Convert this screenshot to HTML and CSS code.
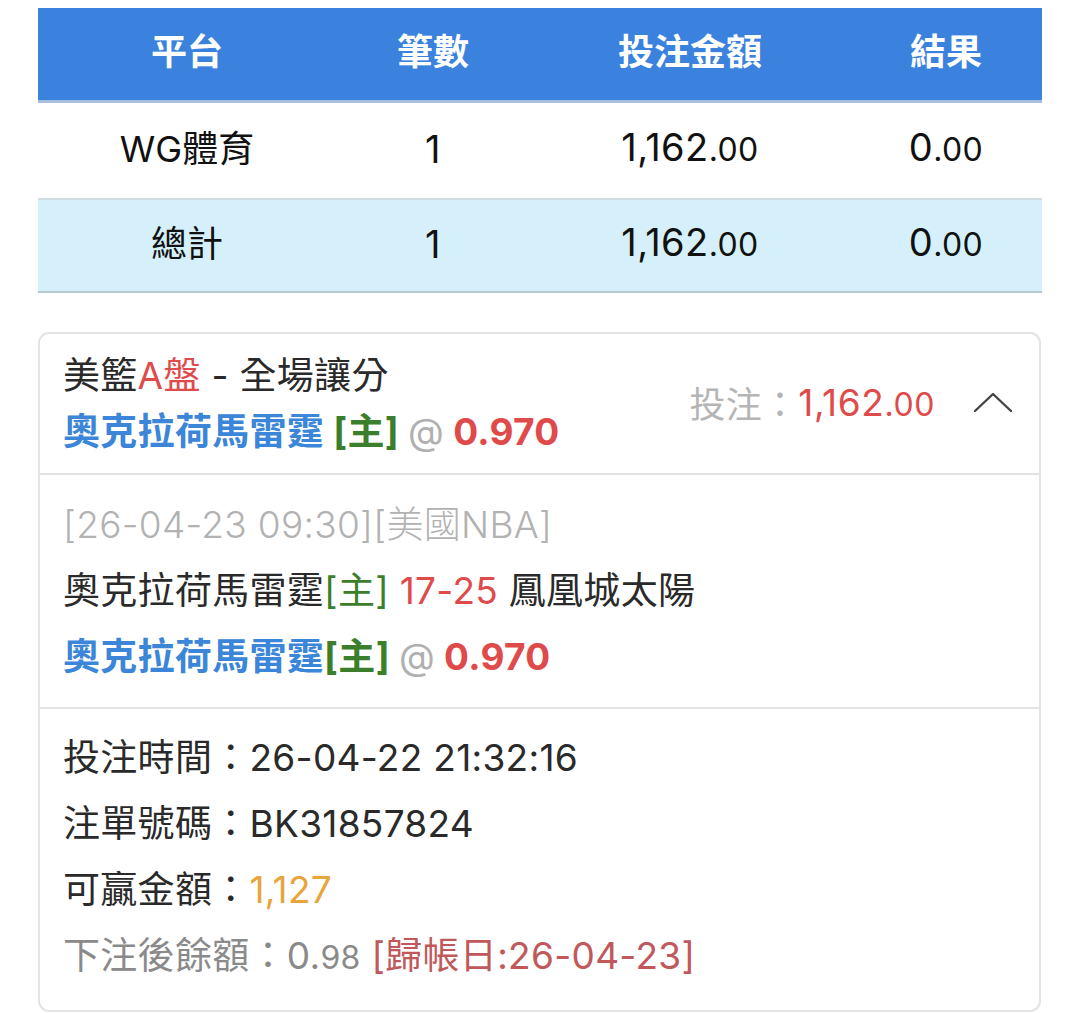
FILE: index.html
```html
<!DOCTYPE html>
<html lang="zh-Hant">
<head>
<meta charset="utf-8">
<link rel="stylesheet" href="styles.css">
</head>
<body>
<div class="page">
  <div class="summary">
    <div class="row head">
      <div class="cell">平台</div>
      <div class="cell">筆數</div>
      <div class="cell">投注金額</div>
      <div class="cell">結果</div>
    </div>
    <div class="row">
      <div class="cell">WG體育</div>
      <div class="cell num">1</div>
      <div class="cell num">1,162<span class="dec">.00</span></div>
      <div class="cell num">0<span class="dec">.00</span></div>
    </div>
    <div class="row total">
      <div class="cell">總計</div>
      <div class="cell num">1</div>
      <div class="cell num">1,162<span class="dec">.00</span></div>
      <div class="cell num">0<span class="dec">.00</span></div>
    </div>
  </div>

  <div class="card">
    <div class="card-head">
      <div class="head-left">
        <div class="line">美籃<span class="red">A盤</span> - 全場讓分</div>
        <div class="line bold"><span class="blue">奧克拉荷馬雷霆</span> <span class="green">[主]</span> <span class="at">@</span> <span class="red">0.970</span></div>
      </div>
      <div class="head-right">
        <span class="muted">投注：</span><span class="red amt">1,162<span class="dec">.00</span></span>
        <svg class="chev" width="40" height="22" viewBox="0 0 40 22"><path d="M2 20 L20 3 L38 20" fill="none" stroke="#444" stroke-width="2.4" stroke-linecap="round" stroke-linejoin="round"/></svg>
      </div>
    </div>
    <div class="card-body">
      <div class="line date">[26-04-23 09:30][美國NBA]</div>
      <div class="line">奧克拉荷馬雷霆<span class="green">[主]</span> <span class="red">17-25</span> 鳳凰城太陽</div>
      <div class="line bold"><span class="blue">奧克拉荷馬雷霆</span><span class="green">[主]</span> <span class="at">@</span> <span class="red">0.970</span></div>
    </div>
    <div class="card-info">
      <div class="line">投注時間：26-04-22 21:32:16</div>
      <div class="line">注單號碼：BK31857824</div>
      <div class="line">可贏金額：<span class="orange">1,127</span></div>
      <div class="line grey">下注後餘額：0.<span class="small">98</span> <span class="maroon">[歸帳日:26-04-23]</span></div>
    </div>
  </div>
</div>
</body>
</html>
```

FILE: styles.css
```css
* { box-sizing: border-box; }
html, body { margin: 0; padding: 0; background: #fff; }
body {
  font-family: "Inter", "Noto Sans CJK TC", sans-serif;
  color: #222;
}
.page {
  padding: 8px 38px 0 38px;
}
.summary {
  width: 1004px;
}
.row {
  display: grid;
  grid-template-columns: 298px 194px 320px 192px;
  align-items: center;
  height: 95px;
  font-size: 36px;
  line-height: 40px;
  color: #111;
  padding-bottom: 4px;
}
.row .cell { text-align: center; }
.row .num { font-size: 38px; letter-spacing: 0.4px; }
.row .num .dec { font-size: 32px; }
.row.head {
  height: 95px;
  background: #3b82de;
  color: #fff;
  font-weight: bold;
  border-bottom: 3px solid #a8bfe2;
  padding-bottom: 4px;
}
.row.total {
  background: #d5f0fa;
  border-top: 2px solid #d0dde3;
  border-bottom: 2px solid #b7c9d1;
}
.dec { font-size: 30px; }

.card {
  margin-top: 39px;
  width: 1003px;
  border: 2px solid #e3e3e3;
  border-radius: 11px;
  font-size: 37px;
  color: #2a2a2a;
  letter-spacing: 0.3px;
}
.line { line-height: 56px; white-space: nowrap; }
.bold { font-weight: bold; }
.card-head {
  display: flex;
  align-items: center;
  justify-content: space-between;
  padding: 14px 26px 13px 23px;
  border-bottom: 2px solid #e3e3e3;
}
.head-right {
  display: flex;
  align-items: center;
  font-size: 36px;
  margin-top: -4px;
}
.amt { margin-right: 38px; font-size: 37px; letter-spacing: 0.6px; }
.amt .dec { font-size: 32px; }
.chev { display: block; }
.card-body {
  padding: 17px 23px 17px 23px;
  border-bottom: 2px solid #e3e3e3;
}
.card-body .line { line-height: 66px; }
.card-info {
  padding: 16px 23px 19px 23px;
}
.card-info .line { line-height: 66px; }
.red { color: #df4a4b; }
.blue { color: #3c86d9; }
.green { color: #3b7e2c; }
.at { color: #b0b0b0; font-weight: normal; }
.muted { color: #b5b5b5; }
.date { color: #b2b2b2; font-weight: 300; }
.orange { color: #e9a43c; }
.grey { color: #8a8a8a; }
.small { font-size: 32px; }
.maroon { color: #c0585c; }
```
